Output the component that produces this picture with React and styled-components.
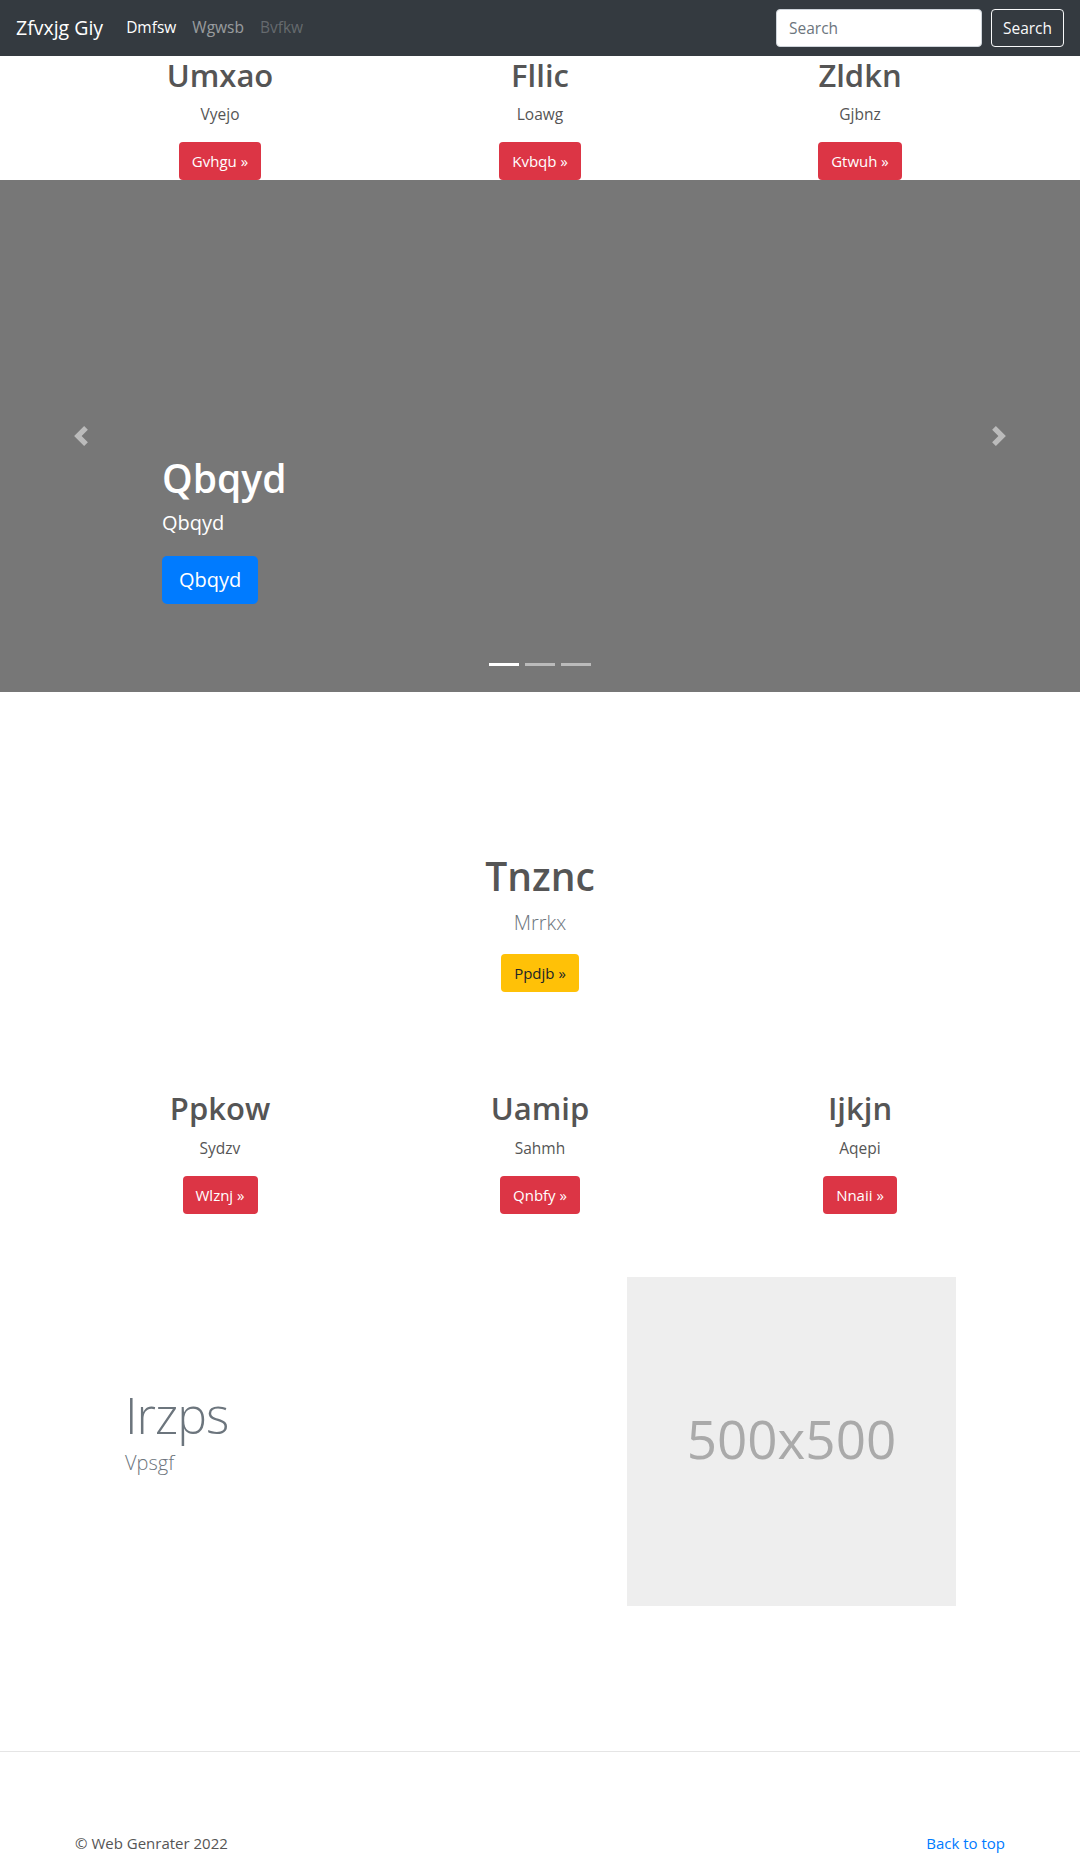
import React from 'react';
import styled, { createGlobalStyle } from 'styled-components';

const GlobalStyle = createGlobalStyle`
  body {
    margin: 0;
    font-family: "Open Sans", "Noto Sans", "Liberation Sans", sans-serif;
    font-size: 16px;
    line-height: 1.5;
    color: #555;
    background: #fff;
  }
  * { box-sizing: border-box; }
`;

const Navbar = styled.nav`
  height: 56px;
  background-color: #343a40;
  display: flex;
  align-items: center;
  padding: 0 16px;
`;

const Brand = styled.a`
  font-size: 19.5px;
  line-height: 30px;
  color: #fff;
  margin-right: 15px;
  text-decoration: none;
`;

const NavLink = styled.a`
  padding: 8px;
  font-size: 15.5px;
  color: ${props => props.$active ? '#fff' : props.$disabled ? 'rgba(255,255,255,0.25)' : 'rgba(255,255,255,0.5)'};
  text-decoration: none;
`;

const SearchForm = styled.form`
  margin-left: auto;
  display: flex;
  align-items: center;
  gap: 9px;
`;

const SearchInput = styled.input`
  width: 206px;
  height: 38px;
  padding: 6px 12px;
  font-family: inherit;
  font-size: 15.5px;
  color: #495057;
  border: 1px solid #ced4da;
  border-radius: 4px;
  outline: none;

  &::placeholder {
    color: #6c757d;
  }
`;

const OutlineButton = styled.button`
  width: 73px;
  height: 38px;
  padding: 6px 0;
  font-family: inherit;
  font-size: 15.5px;
  line-height: 24px;
  color: #f8f9fa;
  background: transparent;
  border: 1px solid #f8f9fa;
  border-radius: 4px;
`;

const Container = styled.div`
  width: 960px;
  margin: 0 auto;
`;

const ColumnRow = styled(Container)`
  display: grid;
  grid-template-columns: repeat(3, 1fr);
  padding-top: ${props => props.$top || 0}px;
`;

const Column = styled.div`
  padding: 0 15px;
  text-align: center;
`;

const ColTitle = styled.h2`
  margin: 0 0 8px;
  font-size: 31px;
  font-weight: 600;
  line-height: 38.4px;
  color: #555;
`;

const ColText = styled.p`
  margin: 0 0 16px;
  font-size: 15.5px;
  line-height: 24px;
`;

const Button = styled.a`
  display: inline-block;
  padding: ${props => props.$large ? '8px 16px' : '6px 12px'};
  font-size: ${props => props.$large ? '20px' : '15px'};
  line-height: ${props => props.$large ? '30px' : '24px'};
  border: 1px solid transparent;
  border-radius: ${props => props.$large ? '5px' : '4px'};
  color: ${props => props.$variant === 'warning' ? '#212529' : '#fff'};
  background-color: ${props =>
    props.$variant === 'warning' ? '#ffc107' :
    props.$variant === 'primary' ? '#007bff' : '#dc3545'};
  text-decoration: none;
`;

const Carousel = styled.div`
  height: 512px;
  background-color: #777;
  display: grid;
  grid-template-columns: 15% 1fr 15%;
`;

const Control = styled.div`
  display: flex;
  align-items: center;
  justify-content: center;
  opacity: 0.5;
`;

const CarouselBody = styled.div`
  display: flex;
  flex-direction: column;
  justify-content: flex-end;
  padding-bottom: 26px;
`;

const Caption = styled.div`
  color: #fff;
  margin-bottom: 59px;
`;

const CaptionTitle = styled.h1`
  margin: 0 0 6px;
  font-size: 39px;
  font-weight: 600;
  line-height: 48px;
`;

const CaptionText = styled.p`
  margin: 0 0 18px;
  font-size: 20px;
  line-height: 30px;
`;

const Indicators = styled.div`
  display: flex;
  justify-content: center;
  gap: 6px;
`;

const Indicator = styled.span`
  width: 30px;
  height: 3px;
  background-color: #fff;
  opacity: ${props => props.$active ? 1 : 0.5};
`;

const Hero = styled.section`
  padding-top: 160px;
  text-align: center;
`;

const HeroTitle = styled.h1`
  margin: 0 0 8px;
  font-size: 39px;
  font-weight: 600;
  line-height: 48px;
  color: #555;
`;

const Lead = styled.p`
  margin: 0 0 ${props => props.$mb ?? 16}px;
  font-size: 20px;
  font-weight: 300;
  line-height: 30px;
  color: #6c757d;
`;

const Featurette = styled(Container)`
  margin-top: 63px;
  padding: 0 64px 0 65px;
  display: grid;
  grid-template-columns: 1fr 329px;
  align-items: center;
`;

const FeaturetteText = styled.div`
  padding-bottom: 20px;
`;

const FeaturetteTitle = styled.h2`
  margin: 0 0 3px;
  font-size: 50px;
  font-weight: 300;
  line-height: 60px;
  letter-spacing: -1px;
  color: #6c757d;
`;

const Placeholder = styled.div`
  width: 329px;
  height: 329px;
  background-color: #eee;
  display: flex;
  align-items: center;
  justify-content: center;
  padding-bottom: 6px;
  font-size: 53px;
  color: #aaa;
`;

const Footer = styled.footer`
  margin-top: 145px;
  border-top: 1px solid #e5e5e5;
  padding-top: 80px;
`;

const FooterInner = styled(Container)`
  display: flex;
  justify-content: space-between;
  padding: 0 15px;
  font-size: 15px;
`;

const FooterLink = styled.a`
  color: #007bff;
  text-decoration: none;
`;

const Chevron = ({ flip }) => (
  <svg width="20" height="20" viewBox="0 0 8 8" style={flip ? { transform: 'scaleX(-1)' } : undefined}>
    <path fill="#fff" d="M5.25 0l-4 4 4 4 1.5-1.5L4.25 4l2.5-2.5L5.25 0z" />
  </svg>
);

const topCols = [
  { title: 'Umxao', text: 'Vyejo', btn: 'Gvhgu' },
  { title: 'Fllic', text: 'Loawg', btn: 'Kvbqb' },
  { title: 'Zldkn', text: 'Gjbnz', btn: 'Gtwuh' },
];

const bottomCols = [
  { title: 'Ppkow', text: 'Sydzv', btn: 'Wlznj' },
  { title: 'Uamip', text: 'Sahmh', btn: 'Qnbfy' },
  { title: 'Ijkjn', text: 'Aqepi', btn: 'Nnaii' },
];

const App = () => {
  return (
    <>
      <GlobalStyle />
      <Navbar>
        <Brand href="#">Zfvxjg Giy</Brand>
        <NavLink href="#" $active>Dmfsw</NavLink>
        <NavLink href="#">Wgwsb</NavLink>
        <NavLink href="#" $disabled>Bvfkw</NavLink>
        <SearchForm onSubmit={e => e.preventDefault()}>
          <SearchInput type="text" placeholder="Search" />
          <OutlineButton type="submit">Search</OutlineButton>
        </SearchForm>
      </Navbar>

      <ColumnRow>
        {topCols.map(c => (
          <Column key={c.title}>
            <ColTitle>{c.title}</ColTitle>
            <ColText>{c.text}</ColText>
            <Button href="#">{c.btn} »</Button>
          </Column>
        ))}
      </ColumnRow>

      <Carousel>
        <Control><Chevron /></Control>
        <CarouselBody>
          <Caption>
            <CaptionTitle>Qbqyd</CaptionTitle>
            <CaptionText>Qbqyd</CaptionText>
            <Button href="#" $large $variant="primary">Qbqyd</Button>
          </Caption>
          <Indicators>
            <Indicator $active />
            <Indicator />
            <Indicator />
          </Indicators>
        </CarouselBody>
        <Control><Chevron flip /></Control>
      </Carousel>

      <Hero>
        <HeroTitle>Tnznc</HeroTitle>
        <Lead>Mrrkx</Lead>
        <Button href="#" $variant="warning">Ppdjb »</Button>
      </Hero>

      <ColumnRow $top={97}>
        {bottomCols.map(c => (
          <Column key={c.title}>
            <ColTitle>{c.title}</ColTitle>
            <ColText>{c.text}</ColText>
            <Button href="#">{c.btn} »</Button>
          </Column>
        ))}
      </ColumnRow>

      <Featurette>
        <FeaturetteText>
          <FeaturetteTitle>Irzps</FeaturetteTitle>
          <Lead $mb={0}>Vpsgf</Lead>
        </FeaturetteText>
        <Placeholder>500x500</Placeholder>
      </Featurette>

      <Footer>
        <FooterInner>
          <span>© Web Genrater 2022</span>
          <FooterLink href="#">Back to top</FooterLink>
        </FooterInner>
      </Footer>
    </>
  );
};

export default App;
